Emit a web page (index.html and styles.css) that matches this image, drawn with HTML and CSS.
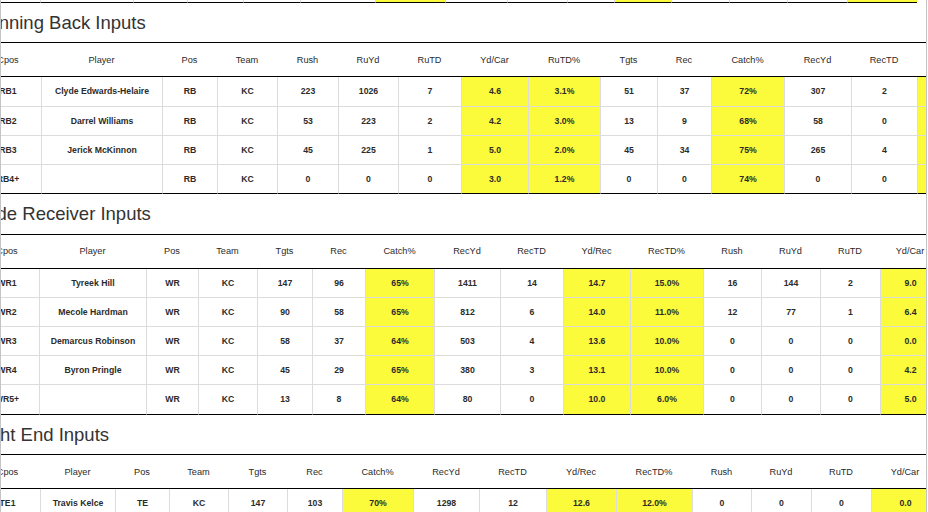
FILE: index.html
```html
<!DOCTYPE html>
<html lang="en">
<head>
<meta charset="utf-8">
<title>Team Inputs</title>
<link rel="stylesheet" href="styles.css">
</head>
<body>
<div class="viewport">
  <div class="sheet">
    <table class="stats t-prev">
      <colgroup>
        <col class="c65"><col class="c93"><col class="c54"><col class="c56"><col class="c57"><col class="c75"><col class="c70"><col class="c62"><col class="c60"><col class="c47"><col class="c57"><col class="c58"><col class="c58"><col class="c60"><col class="c70">
      </colgroup>
      <tbody>
        <tr class="last"><td></td><td></td><td></td><td></td><td></td><td></td><td class="hl"></td><td></td><td></td><td></td><td class="hl"></td><td></td><td></td><td></td><td class="hl"></td></tr>
      </tbody>
    </table>

    <h2 class="section-title">Running Back Inputs</h2>
    <table class="stats t-rb">
      <colgroup>
        <col class="c66"><col class="c121"><col class="c55"><col class="c60"><col class="c61"><col class="c60"><col class="c63"><col class="c67"><col class="c72"><col class="c57"><col class="c54"><col class="c73"><col class="c67"><col class="c66"><col class="c67">
      </colgroup>
      <thead>
        <tr><th>Cpos</th><th>Player</th><th>Pos</th><th>Team</th><th>Rush</th><th>RuYd</th><th>RuTD</th><th>Yd/Car</th><th>RuTD%</th><th>Tgts</th><th>Rec</th><th>Catch%</th><th>RecYd</th><th>RecTD</th><th>Yd/Rec</th></tr>
      </thead>
      <tbody>
        <tr><td>RB1</td><td>Clyde Edwards-Helaire</td><td>RB</td><td>KC</td><td>223</td><td>1026</td><td>7</td><td class="hl">4.6</td><td class="hl">3.1%</td><td>51</td><td>37</td><td class="hl">72%</td><td>307</td><td>2</td><td class="hl">8.3</td></tr>
        <tr><td>RB2</td><td>Darrel Williams</td><td>RB</td><td>KC</td><td>53</td><td>223</td><td>2</td><td class="hl">4.2</td><td class="hl">3.0%</td><td>13</td><td>9</td><td class="hl">68%</td><td>58</td><td>0</td><td class="hl">6.4</td></tr>
        <tr><td>RB3</td><td>Jerick McKinnon</td><td>RB</td><td>KC</td><td>45</td><td>225</td><td>1</td><td class="hl">5.0</td><td class="hl">2.0%</td><td>45</td><td>34</td><td class="hl">75%</td><td>265</td><td>4</td><td class="hl">7.8</td></tr>
        <tr class="last"><td>RB4+</td><td></td><td>RB</td><td>KC</td><td>0</td><td>0</td><td>0</td><td class="hl">3.0</td><td class="hl">1.2%</td><td>0</td><td>0</td><td class="hl">74%</td><td>0</td><td>0</td><td class="hl">0.0</td></tr>
      </tbody>
    </table>

    <h2 class="section-title">Wide Receiver Inputs</h2>
    <table class="stats t-wr">
      <colgroup>
        <col class="c64"><col class="c107"><col class="c52"><col class="c59"><col class="c55"><col class="c53"><col class="c69"><col class="c66"><col class="c63"><col class="c67"><col class="c73"><col class="c58"><col class="c59"><col class="c60"><col class="c60">
      </colgroup>
      <thead>
        <tr><th>Cpos</th><th>Player</th><th>Pos</th><th>Team</th><th>Tgts</th><th>Rec</th><th>Catch%</th><th>RecYd</th><th>RecTD</th><th>Yd/Rec</th><th>RecTD%</th><th>Rush</th><th>RuYd</th><th>RuTD</th><th>Yd/Car</th></tr>
      </thead>
      <tbody>
        <tr><td>WR1</td><td>Tyreek Hill</td><td>WR</td><td>KC</td><td>147</td><td>96</td><td class="hl">65%</td><td>1411</td><td>14</td><td class="hl">14.7</td><td class="hl">15.0%</td><td>16</td><td>144</td><td>2</td><td class="hl">9.0</td></tr>
        <tr><td>WR2</td><td>Mecole Hardman</td><td>WR</td><td>KC</td><td>90</td><td>58</td><td class="hl">65%</td><td>812</td><td>6</td><td class="hl">14.0</td><td class="hl">11.0%</td><td>12</td><td>77</td><td>1</td><td class="hl">6.4</td></tr>
        <tr><td>WR3</td><td>Demarcus Robinson</td><td>WR</td><td>KC</td><td>58</td><td>37</td><td class="hl">64%</td><td>503</td><td>4</td><td class="hl">13.6</td><td class="hl">10.0%</td><td>0</td><td>0</td><td>0</td><td class="hl">0.0</td></tr>
        <tr><td>WR4</td><td>Byron Pringle</td><td>WR</td><td>KC</td><td>45</td><td>29</td><td class="hl">65%</td><td>380</td><td>3</td><td class="hl">13.1</td><td class="hl">10.0%</td><td>0</td><td>0</td><td>0</td><td class="hl">4.2</td></tr>
        <tr class="last"><td>WR5+</td><td></td><td>WR</td><td>KC</td><td>13</td><td>8</td><td class="hl">64%</td><td>80</td><td>0</td><td class="hl">10.0</td><td class="hl">6.0%</td><td>0</td><td>0</td><td>0</td><td class="hl">5.0</td></tr>
      </tbody>
    </table>

    <h2 class="section-title">Tight End Inputs</h2>
    <table class="stats t-te">
      <colgroup>
        <col class="c65"><col class="c75"><col class="c54"><col class="c59"><col class="c59"><col class="c55"><col class="c71"><col class="c66"><col class="c67"><col class="c70"><col class="c76"><col class="c59"><col class="c60"><col class="c60"><col class="c68">
      </colgroup>
      <thead>
        <tr><th>Cpos</th><th>Player</th><th>Pos</th><th>Team</th><th>Tgts</th><th>Rec</th><th>Catch%</th><th>RecYd</th><th>RecTD</th><th>Yd/Rec</th><th>RecTD%</th><th>Rush</th><th>RuYd</th><th>RuTD</th><th>Yd/Car</th></tr>
      </thead>
      <tbody>
        <tr><td>TE1</td><td>Travis Kelce</td><td>TE</td><td>KC</td><td>147</td><td>103</td><td class="hl">70%</td><td>1298</td><td>12</td><td class="hl">12.6</td><td class="hl">12.0%</td><td>0</td><td>0</td><td>0</td><td class="hl">0.0</td></tr>
      </tbody>
    </table>
  </div>
</div>
</body>
</html>
```

FILE: styles.css
```css
html, body {
  margin: 0;
  padding: 0;
  background: #ffffff;
}

body {
  font-family: "Liberation Sans", Arial, Helvetica, sans-serif;
  color: #222222;
}

.viewport {
  box-sizing: border-box;
  width: 927px;
  height: 512px;
  overflow: hidden;
  border-left: 1px solid #c4c4c4;
  border-right: 1px solid #c4c4c4;
  background: #ffffff;
}

/* content is horizontally and vertically scrolled */
.sheet {
  margin-left: -26px;
  margin-top: -26.2px;
  width: 1100px;
}

.section-title {
  box-sizing: border-box;
  height: 39.5px;
  margin: 0;
  padding: 10px 0 0 0;
  font-size: 18.5px;
  line-height: 20px;
  font-weight: normal;
  color: #333333;
  white-space: nowrap;
}

.stats {
  table-layout: fixed;
  border-collapse: separate;
  border-spacing: 0;
}

.t-prev { width: 942px; }
.t-rb { width: 1009px; }
.t-wr { width: 965px; }
.t-te { width: 964px; }

.stats th {
  box-sizing: border-box;
  height: 35px;
  padding: 0;
  border-top: 1px solid #000000;
  border-bottom: 1px solid #000000;
  font-size: 9.2px;
  font-weight: normal;
  color: #2a2a2a;
  text-align: center;
  vertical-align: middle;
  white-space: nowrap;
  overflow: hidden;
}

.stats td {
  box-sizing: border-box;
  height: 29.2px;
  padding: 0;
  border-bottom: 1px solid #dcdcdc;
  border-left: 1px solid #dcdcdc;
  font-size: 8.7px;
  font-weight: bold;
  color: #2b2b2b;
  text-align: center;
  vertical-align: middle;
  white-space: nowrap;
  overflow: hidden;
}

.stats td:first-child {
  border-left: none;
}

.stats tr.last td {
  border-bottom: 1px solid #000000;
}

.t-prev td {
  height: 29px;
}

.stats td.hl {
  background: #fbfb3c;
}

.c47 { width: 47px; }
.c52 { width: 52px; }
.c53 { width: 53px; }
.c54 { width: 54px; }
.c55 { width: 55px; }
.c56 { width: 56px; }
.c57 { width: 57px; }
.c58 { width: 58px; }
.c59 { width: 59px; }
.c60 { width: 60px; }
.c61 { width: 61px; }
.c62 { width: 62px; }
.c63 { width: 63px; }
.c64 { width: 64px; }
.c65 { width: 65px; }
.c66 { width: 66px; }
.c67 { width: 67px; }
.c68 { width: 68px; }
.c69 { width: 69px; }
.c70 { width: 70px; }
.c71 { width: 71px; }
.c72 { width: 72px; }
.c73 { width: 73px; }
.c75 { width: 75px; }
.c76 { width: 76px; }
.c93 { width: 93px; }
.c107 { width: 107px; }
.c121 { width: 121px; }
```
